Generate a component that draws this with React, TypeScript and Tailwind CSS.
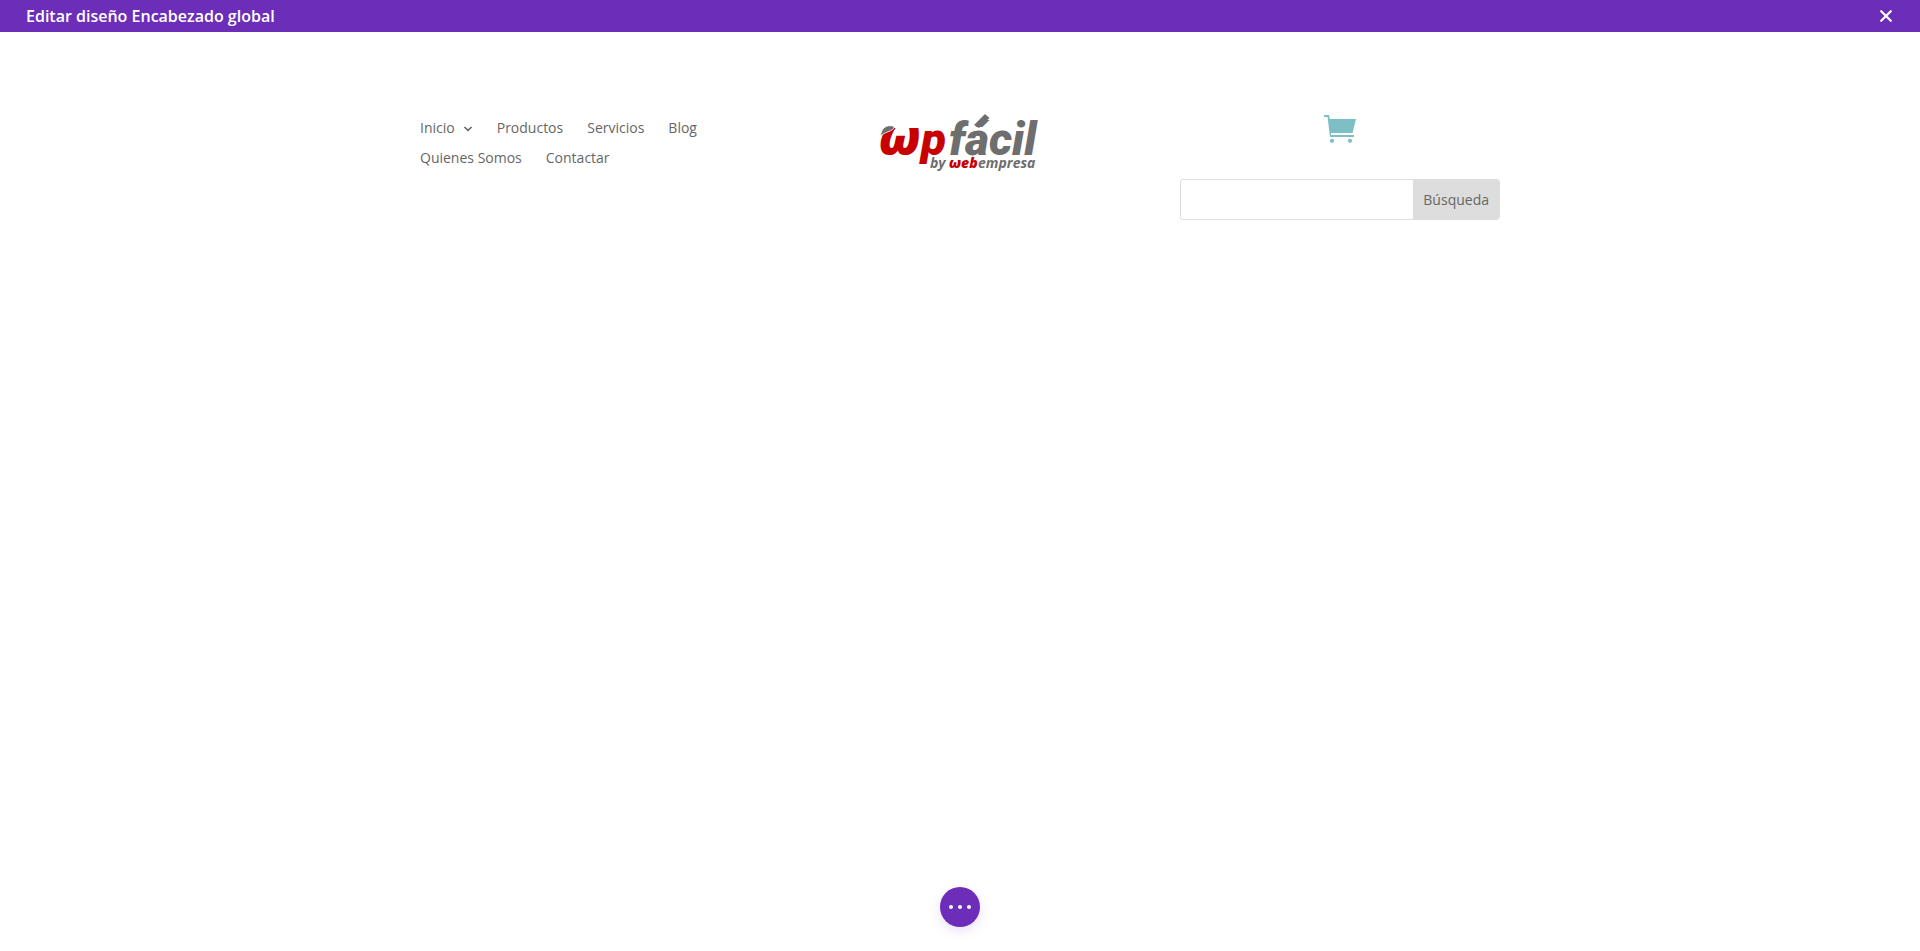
import { useState } from 'react';

type MenuItem = { label: string; hasChildren?: boolean };

const MENU: MenuItem[] = [
  { label: 'Inicio', hasChildren: true },
  { label: 'Productos' },
  { label: 'Servicios' },
  { label: 'Blog' },
  { label: 'Quienes Somos' },
  { label: 'Contactar' },
];

function TopBar() {
  return (
    <header className="flex h-8 items-center justify-between bg-[#6c2eb9] pr-7 pl-[26px] text-white">
      <h1 className="text-base font-semibold">Editar diseño Encabezado global</h1>
      <button type="button" aria-label="Cerrar" className="p-0">
        <svg width="12" height="12" viewBox="0 0 12 12" fill="none" stroke="currentColor" strokeWidth="2.2" strokeLinecap="round">
          <path d="M1.2 1.2l9.6 9.6M10.8 1.2L1.2 10.8" />
        </svg>
      </button>
    </header>
  );
}

function Menu() {
  return (
    <nav>
      <ul className="flex flex-wrap gap-x-6 text-sm leading-[30px]">
        {MENU.map(item => (
          <li key={item.label}>
            <a href="#" className="flex items-center gap-2">
              {item.label}
              {item.hasChildren && (
                <svg width="10" height="10" viewBox="0 0 10 10" fill="none" stroke="currentColor" strokeWidth="1.6">
                  <path d="M1.4 4L5 7.4L8.6 4" />
                </svg>
              )}
            </a>
          </li>
        ))}
      </ul>
    </nav>
  );
}

function Logo() {
  return (
    <a href="#" aria-label="wpfácil by webempresa" className="mx-auto">
      <svg width="160" height="60" viewBox="0 0 160 60" className="overflow-visible" fontStyle="italic">
        <text y="42" fontSize="46" fontWeight="900" fontFamily="Roboto, sans-serif" fill="#6e6e6e">
          <tspan x="-1" fill="#c80000" fontSize="48" fontFamily="'Open Sans', sans-serif">ω</tspan>
          <tspan x="41" fill="#c80000">p</tspan>
          <tspan x="69">fácil</tspan>
        </text>
        <path d="M94 12L105 1L109.5 5L99 15Z" fill="#6e6e6e" />
        <path d="M0.5 23C1 16 6 10.5 14.5 13.5C13 19 6 18 0.5 23Z" fill="#6e6e6e" stroke="#fff" strokeWidth="0.8" />
        <text y="55" fontSize="14" fontWeight="700" fontFamily="'Open Sans', sans-serif" fill="#6e6e6e">
          <tspan x="50">by</tspan>
          <tspan x="69" fill="#c80000" fontWeight="800">ωeb</tspan>
          <tspan x="98">empresa</tspan>
        </text>
      </svg>
    </a>
  );
}

function CartLink() {
  return (
    <a href="#" aria-label="Carrito" className="text-[#7ebec5]">
      <svg width="34" height="30" viewBox="0 0 34 30" fill="currentColor">
        <path d="M1 2H6L6.8 6H33L29.5 20H8.3L8.6 22H31V24H7L4.6 4H1Z" />
        <path d="M8 20H30V22H8Z" fill="#fff" />
        <circle cx="9" cy="27.8" r="2.1" />
        <circle cx="27" cy="27.8" r="2.1" />
      </svg>
    </a>
  );
}

function SearchForm() {
  const [query, setQuery] = useState('');

  return (
    <form className="flex h-[41px] w-full overflow-hidden rounded-[3px] border border-[#dddddd]" onSubmit={e => e.preventDefault()}>
      <input
        type="text"
        aria-label="Búsqueda"
        value={query}
        onChange={e => setQuery(e.target.value)}
        className="min-w-0 flex-1 px-3 text-sm outline-none"
      />
      <button type="submit" className="bg-[#dddddd] px-[10px] text-sm">Búsqueda</button>
    </form>
  );
}

export default function App() {
  return (
    <div className="flex min-h-screen flex-col bg-white font-['Open_Sans',sans-serif] text-[#666666]">
      <TopBar />
      <main className="mx-auto grid w-4/5 max-w-[1080px] flex-1 grid-cols-3 items-start gap-[60px] pt-[81px]">
        <Menu />
        <Logo />
        <div className="flex flex-col items-center gap-9">
          <CartLink />
          <SearchForm />
        </div>
      </main>
      <footer className="flex justify-center pb-6">
        <button
          type="button"
          aria-label="Opciones de página"
          className="flex size-10 items-center justify-center gap-[5px] rounded-full bg-[#6c2eb9] shadow-[0_4px_12px_rgba(108,46,185,0.15)]"
        >
          <span className="size-1 rounded-full bg-white" />
          <span className="size-1 rounded-full bg-white" />
          <span className="size-1 rounded-full bg-white" />
        </button>
      </footer>
    </div>
  );
}
